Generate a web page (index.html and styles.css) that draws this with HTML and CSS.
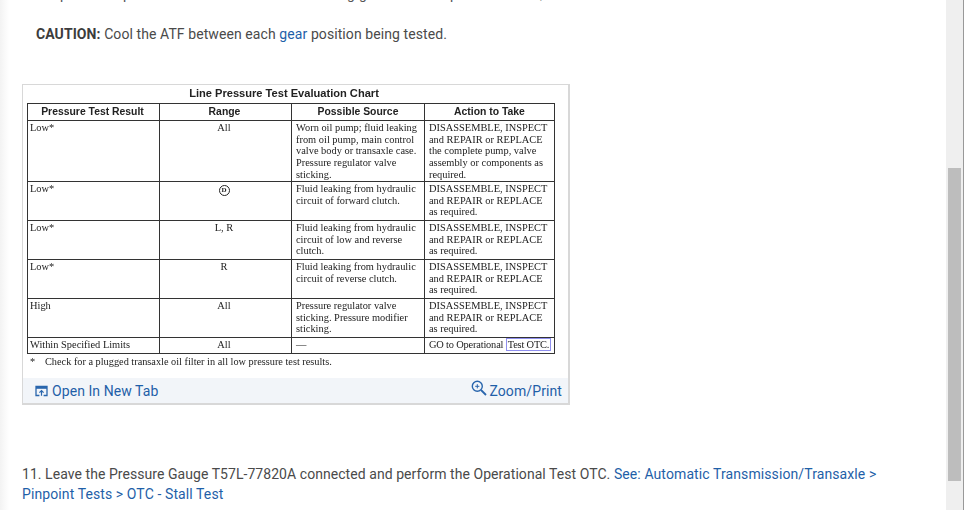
FILE: index.html
```html
<!DOCTYPE html>
<html lang="en">
<head>
<meta charset="utf-8">
<title>Line Pressure Test</title>
<link rel="stylesheet" href="styles.css">
</head>
<body>
<div class="page">
  <main class="content">
    <div class="cut" aria-hidden="true"><span class="c1">p</span><span class="c2">p</span><span class="c3">g</span><span class="c4">g</span><span class="c5">p</span><span class="c6">,</span></div>
    <p class="caution"><strong>CAUTION:</strong> Cool the ATF between each <a href="#">gear</a> position being tested.</p>
    <figure class="card">
      <div class="scan">
        <div class="scan-title">Line Pressure Test Evaluation Chart</div>
        <table class="chart">
          <colgroup><col class="w1"><col class="w2"><col class="w3"><col class="w4"></colgroup>
          <thead>
            <tr><th class="hl">Pressure Test Result</th><th class="hl">Range</th><th>Possible Source</th><th>Action to Take</th></tr>
          </thead>
          <tbody>
            <tr class="r5"><td class="first">Low*</td><td class="mid">All</td><td>Worn oil pump; fluid leaking from oil pump, main control valve body or transaxle case. Pressure regulator valve sticking.</td><td class="act">DISASSEMBLE, INSPECT and REPAIR or REPLACE the complete pump, valve assembly or components as required.</td></tr>
            <tr class="r3"><td class="first">Low*</td><td class="mid"><span class="circled">D</span></td><td>Fluid leaking from hydraulic circuit of forward clutch.</td><td class="act">DISASSEMBLE, INSPECT and REPAIR or REPLACE as required.</td></tr>
            <tr class="r3"><td class="first">Low*</td><td class="mid">L, R</td><td>Fluid leaking from hydraulic circuit of low and reverse clutch.</td><td class="act">DISASSEMBLE, INSPECT and REPAIR or REPLACE as required.</td></tr>
            <tr class="r3"><td class="first">Low*</td><td class="mid">R</td><td>Fluid leaking from hydraulic circuit of reverse clutch.</td><td class="act">DISASSEMBLE, INSPECT and REPAIR or REPLACE as required.</td></tr>
            <tr class="r3"><td class="first">High</td><td class="mid">All</td><td>Pressure regulator valve sticking. Pressure modifier sticking.</td><td class="act">DISASSEMBLE, INSPECT and REPAIR or REPLACE as required.</td></tr>
            <tr class="r1"><td class="first">Within Specified Limits</td><td class="mid">All</td><td>—</td><td class="act nowrap">GO to Operational <span class="mark">Test OTC.</span></td></tr>
          </tbody>
        </table>
        <div class="footnote"><span class="star">*</span>Check for a plugged transaxle oil filter in all low pressure test results.</div>
      </div>
      <figcaption class="tools">
        <a href="#" class="tool">
          <svg class="ico-tab" viewBox="0 0 13 12" width="13" height="12" aria-hidden="true"><path d="M4.400 10.500H1v-9h11v9H8.600" fill="none" stroke="#2a66ad" stroke-width="1.300"/><path d="M1 2.800h11" stroke="#2a66ad" stroke-width="2"/><path d="M6.500 10.800V5.800M4.400 7.700l2.100-2.100 2.100 2.100" fill="none" stroke="#2a66ad" stroke-width="1.200"/></svg>
          Open In New Tab
        </a>
        <a href="#" class="tool zoom">
          <svg class="ico-zoom" viewBox="0 0 16 16" width="16" height="16" aria-hidden="true"><circle cx="6.300" cy="6.300" r="5" fill="none" stroke="#2a66ad" stroke-width="1.400"/><path d="M10 10l5 5" stroke="#2a66ad" stroke-width="1.800"/><path d="M4.200 6.300h4.200M6.300 4.200v4.200" stroke="#2a66ad" stroke-width="1"/></svg>
          Zoom/Print
        </a>
      </figcaption>
    </figure>
    <p class="step">11. Leave the Pressure Gauge T57L-77820A connected and perform the Operational Test OTC. <a href="#">See: Automatic Transmission/Transaxle &gt; Pinpoint Tests &gt; OTC - Stall Test</a></p>
  </main>
  <aside class="scrollbar" aria-hidden="true"><div class="thumb"></div></aside>
</div>
</body>
</html>
```
FILE: styles.css
```css
* { box-sizing: border-box; }
html, body { margin: 0; height: 100%; overflow: hidden; background: #fff; }
body { font-family: Roboto, "Liberation Sans", sans-serif; font-size: 14px; color: #4a4a4a; }
a { color: #1f5fa8; text-decoration: none; }

.page { display: flex; width: 964px; height: 510px; }
.content {
  flex: 1;
  padding: 0 0 0 22px;
  background: linear-gradient(to right, #f3f3f3 0, #fff 9px);
  overflow: hidden;
}

.cut { position: relative; height: 4px; overflow: hidden; }
.cut span { position: absolute; line-height: 10px; height: 14px; top: -11px; color: #555; }
.c1 { left: 38px; } .c2 { left: 101px; } .c3 { left: 325px; } .c4 { left: 337px; } .c5 { left: 428px; } .c6 { left: 518px; }

.caution { margin: 21px 0 0 14px; line-height: 18px; letter-spacing: .085px; }
.caution strong { font-weight: 700; color: #3c3c3c; }

.card {
  margin: 41px 0 0;
  width: 548px;
  background: #fff;
  border: 1px solid #d8d8d8;
  border-bottom-width: 2px;
  border-right-width: 2px;
}
.scan { padding: 1px 14px 0 4px; height: 293px; filter: blur(.3px); color: #222; }
.scan-title { font: 700 11.100px/14px "Liberation Sans", sans-serif; text-align: center; height: 17px; padding-right: 13px; }

.chart { width: 527px; table-layout: fixed; border-collapse: collapse; font: 10.400px/11.700px "Liberation Serif", serif; }
.w1 { width: 132px; } .w2 { width: 132px; } .w3 { width: 133px; } .w4 { width: 130px; }
.chart th, .chart td { border: 1px solid #333; vertical-align: top; }
.chart th { font: 700 10.400px/14px "Liberation Sans", sans-serif; height: 17px; text-align: center; padding: 1px 0 0; }
.chart th.hl { padding-right: 2px; }
.chart td { padding: 1px 3px 0 4px; }
.chart td.first { padding-left: 2px; }
.chart td.act { padding: 1px 6px 0 4px; }
.chart td.mid { text-align: center; padding: 1px 5px 0 2px; }
.chart td.nowrap { white-space: nowrap; padding-right: 0; letter-spacing: -.18px; }
.r5 td { height: 61px; }
.r3 td { height: 39px; }
.r1 td { height: 16px; }
.circled { display: inline-block; width: 11px; height: 11px; margin-top: 1px; line-height: 9px; border: 1.500px solid #222; border-radius: 50%; font-size: 7px; font-weight: 700; }
.mark { border: 1px solid #8f8fee; padding: 0 1px; }
.footnote { font: 10.300px/14px "Liberation Serif", serif; margin-top: 1px; padding-left: 3px; }
.star { display: inline-block; width: 15px; }

.tools {
  display: flex;
  justify-content: space-between;
  align-items: center;
  height: 25px;
  padding: 0 6px 0 12px;
  background: #f2f5f9;
}
.tool { display: flex; align-items: center; gap: 4px; color: #1f5fa8; font-size: 14px; letter-spacing: .07px; }
.zoom { gap: 2px; letter-spacing: .1px; }
.ico-zoom { margin-top: -6px; }

.step { margin: 59px 0 0; width: 880px; line-height: 20px; letter-spacing: .055px; }
.step a { letter-spacing: .1px; }

.scrollbar { width: 18px; background: #efefef; border-right: 1px solid #999; padding: 168px 2px 0; }
.thumb { height: 313px; background: #bdbdbd; }
```
